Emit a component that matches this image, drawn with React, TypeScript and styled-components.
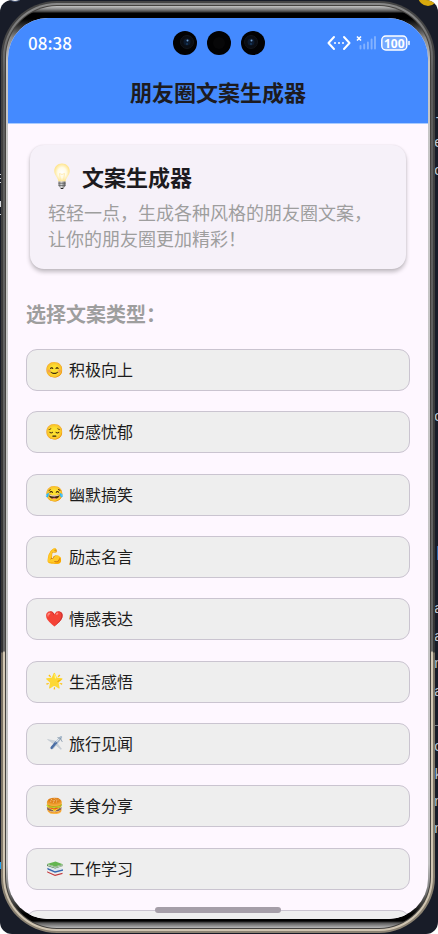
import React from "react";
import styled, { createGlobalStyle } from "styled-components";

const GlobalStyle = createGlobalStyle`
  *, *::before, *::after { box-sizing: border-box; }
  body {
    margin: 0;
    background: #ffffff;
    font-family: "Noto Sans CJK SC", "Noto Sans", sans-serif;
  }
  h1, h2, p, ul { margin: 0; padding: 0; }
`;

const Desktop = styled.div`
  position: relative;
  display: grid;
  grid-template-columns: minmax(0, 1fr);
  height: 100vh;
  padding: 1px 3px 1px 1px;
  overflow: hidden;
  border-radius: 12px;
  background: #181c28;
`;

const CodeEdge = styled.div<{ $side: "left" | "right" }>`
  position: absolute;
  top: 0;
  ${({ $side }) => ($side === "left" ? "left: 0;" : "right: 0;")}
  width: 4px;
  height: 100%;
  overflow: hidden;
`;

const Letter = styled.span<{ $top: number }>`
  position: absolute;
  top: ${({ $top }) => $top}px;
  left: 0;
  color: #c3c8d2;
  font-family: "Liberation Mono", monospace;
  font-size: 14px;
  line-height: 16px;
`;

const Mark = styled.i<{ $top: number; $height: number; $color: string }>`
  position: absolute;
  left: 0;
  top: ${({ $top }) => $top}px;
  width: 1px;
  height: ${({ $height }) => $height}px;
  background: ${({ $color }) => $color};
`;

const YellowDot = styled.i`
  position: absolute;
  top: -14px;
  right: 0;
  width: 20px;
  height: 20px;
  border-radius: 50%;
  background: #d8a90c;
`;

const MoonDot = styled.i`
  position: absolute;
  top: -16px;
  left: 6px;
  width: 18px;
  height: 18px;
  border: 1px solid #3b4a6b;
  border-radius: 50%;
  background: #f4f4f4;
`;

const Phone = styled.div`
  position: relative;
  display: grid;
  min-height: 0;
  padding: 2px;
  border-radius: 56px;
  background: linear-gradient(#454545 0, #343434 69.8%, #766e60 70%, #8b8272 100%);
`;

const Band = styled.div`
  display: grid;
  min-height: 0;
  padding: 2px;
  border-radius: 54px;
  background: linear-gradient(#8a8a8a 0, #5c5c5c 8%, #636363 69.8%, #d3c8b5 70%, #cfc4b1 100%);
`;

const Groove = styled.div`
  display: grid;
  min-height: 0;
  padding: 1px;
  border-radius: 52px;
  background: #44423f;
`;

const Lip = styled.div`
  display: grid;
  min-height: 0;
  padding: 12px 2px 9px;
  border-radius: 51px;
  background: linear-gradient(
    #c4c4c4 0,
    #8c8c8c 3px,
    #3c3c3c 6px,
    #000000 7px,
    #000000 13px,
    #8a8a8a 32px,
    #c6c6c6 56px,
    #c2c2c2 calc(100% - 64px),
    #777777 calc(100% - 36px),
    #000000 calc(100% - 14px),
    #000000 calc(100% - 7px),
    #5c5c5c calc(100% - 5px),
    #b8b8b8 100%
  );
`;

const Screen = styled.main`
  position: relative;
  display: flex;
  flex-direction: column;
  min-height: 0;
  overflow: hidden;
  border-radius: 40px;
  background: #fef7ff;
`;

const Header = styled.header`
  flex: none;
  border-bottom: 1px solid #a9cbff;
  background: #448aff;
`;

const StatusBar = styled.div`
  display: grid;
  grid-template-columns: 1fr auto 1fr;
  align-items: center;
  height: 50px;
  padding: 0 18px 0 20px;
  color: #ffffff;
`;

const Clock = styled.time`
  font-size: 17px;
  line-height: 24px;
  font-weight: 500;
`;

const Cameras = styled.div`
  display: flex;
  gap: 10px;
`;

const StatusIcons = styled.div`
  display: flex;
  justify-content: flex-end;
  align-items: center;
  gap: 5px;
`;

const AppTitle = styled.h1`
  padding: 7px 0 16px;
  color: #1d1b20;
  font-size: 22px;
  line-height: 32px;
  font-weight: 700;
  text-align: center;
`;

const Content = styled.div`
  flex: 1;
  min-height: 0;
  overflow: hidden;
  padding: 21px 18px 0;
`;

const Card = styled.section`
  margin: 0 4px;
  padding: 15px 18px 18px;
  border-radius: 14px;
  background: #f6f1f9;
  box-shadow: 0 3px 4px rgba(0, 0, 0, 0.24), 0 0 2px rgba(0, 0, 0, 0.1);
`;

const CardTitle = styled.h2`
  display: flex;
  align-items: center;
  gap: 6px;
  color: #1d1b20;
  font-size: 22px;
  line-height: 32px;
  font-weight: 700;
`;

const CardText = styled.p`
  margin-top: 7px;
  color: #9e9e9e;
  font-size: 18px;
  line-height: 26px;
`;

const SectionTitle = styled.h2`
  margin: 30px 0 20px;
  color: #9e9e9e;
  font-size: 20px;
  line-height: 30px;
  font-weight: 700;
`;

const TypeList = styled.ul`
  display: grid;
  grid-auto-rows: 42px;
  align-content: space-between;
  min-height: 603px;
  list-style: none;
`;

const TypeButton = styled.button`
  display: flex;
  align-items: center;
  gap: 5px;
  width: 100%;
  height: 100%;
  padding: 0 18px 2px;
  border: 1px solid #cac4d0;
  border-radius: 11px;
  background: #eeeeee;
  color: #1c1c1c;
  font-family: inherit;
  font-size: 16px;
  line-height: 24px;
  text-align: left;
  cursor: pointer;
`;

const Emoji = styled.span`
  display: flex;
  flex: none;
  justify-content: center;
  width: 19px;
  padding-top: 1px;
  font-family: "Noto Color Emoji", sans-serif;
  font-size: 15px;
`;

const HomeIndicator = styled.div`
  position: absolute;
  bottom: 6px;
  left: 50%;
  width: 30%;
  height: 6px;
  border-radius: 3px;
  background: #a59ea8;
  transform: translateX(-50%);
`;

const Camera = ({ lens, shift = 0 }: { lens: boolean; shift?: number }) => (
  <svg width="24" height="24" viewBox="0 0 24 24" aria-hidden="true">
    <circle cx="12" cy="12" r="12" fill="#020203" />
    {lens ? (
      <g transform={`translate(${shift} 0)`}>
        <circle cx="12" cy="11" r="6.5" fill="#0a0d13" stroke="#12161c" />
        <circle cx="12" cy="11" r="3.5" fill="#0c1a2e" />
        <circle cx="12.5" cy="9.5" r="1" fill="#6f9fd0" />
        <circle cx="12" cy="13" r="0.8" fill="#24507f" />
      </g>
    ) : (
      <circle cx="12" cy="12" r="6" fill="#070708" />
    )}
  </svg>
);

const Bulb = () => (
  <svg width="28" height="28" viewBox="0 0 28 28" aria-hidden="true">
    <defs>
      <radialGradient id="bulbGlow" cx="0.5" cy="0.5" r="0.55">
        <stop offset="0" stopColor="#ffffff" />
        <stop offset="0.5" stopColor="#fffbe6" />
        <stop offset="1" stopColor="#ffe07a" />
      </radialGradient>
      <linearGradient id="bulbBase" x1="0" x2="1" y1="0" y2="0">
        <stop offset="0" stopColor="#6c6c6c" />
        <stop offset="0.4" stopColor="#d6d6d6" />
        <stop offset="1" stopColor="#555555" />
      </linearGradient>
    </defs>
    <path d="M14 1.500c-4.500 0-7.700 3.300-7.700 7.600 0 4.100 3.300 6 4.200 10.400h7c.9-4.400 4.200-6.300 4.200-10.400 0-4.300-3.200-7.600-7.700-7.600z" fill="url(#bulbGlow)" />
    <path d="M12.500 18.500l-1-7 2.500 1 2.500-1-1 7" fill="none" stroke="#ffe9a6" strokeWidth="0.800" />
    <path d="M10.500 19.500h7v4.200l-1.800 2.300h-3.400l-1.800-2.300z" fill="url(#bulbBase)" />
    <path d="M10.500 21.300h7M10.700 23.500h6.600" stroke="#5f5f5f" strokeWidth="0.700" />
    <path d="M12.300 26h3.400l-.7 1h-2z" fill="#222222" />
  </svg>
);

const Plane = () => (
  <svg width="18" height="18" viewBox="0 0 18 18" aria-hidden="true">
    <path d="M1.500 5.500l8 1.500 1.500 2.500-3 .5zM8 9.500l3-.5 4.500 6-.6.4z" fill="#cbd3da" stroke="#b4bec7" strokeWidth="0.400" />
    <path d="M15.800 2.300c.7.600.3 1.800-.5 2.700L7.800 14.300c-1 1.100-2 1.400-2.600.9-.6-.5-.4-1.500.4-2.600l7.300-9c.9-1 2.200-1.900 2.900-1.300z" fill="#a9bacb" />
    <path d="M10 8.500l-4.400 5.300" stroke="#4a6ea5" strokeWidth="2.400" strokeLinecap="round" />
    <path d="M13.500 4.300L9.800 8.500" stroke="#e2e9ef" strokeWidth="1" />
    <path d="M11.500 3.500l3 1 1.800 3.400" fill="none" stroke="#71869e" strokeWidth="0.700" />
  </svg>
);

const Books = () => (
  <svg width="18" height="18" viewBox="0 0 18 18" aria-hidden="true">
    <path d="M1 12.300l8 3.500 7.500-2v1.300L9 17 1.300 13.600z" fill="#c4393c" />
    <path d="M1 11.800l7-1.300 8.300 2L9 14.600z" fill="#e6e7ea" />
    <path d="M1.300 8.800l7.700 3.400 8-2v1.600l-8 2-7.500-3.400z" fill="#3568b0" />
    <path d="M2 8.500l6.500-1.200L17 9.500 9 11.800z" fill="#dce6ef" />
    <path d="M1 5.200l8.200 2.600 7.600-2.200v1.500L9.200 9.400 1.200 7z" fill="#43793d" />
    <path d="M2 6.200l7.200 2.300 7.400-2" fill="none" stroke="#eef3eb" strokeWidth="0.800" />
    <path d="M1 5l8.500-2.400 7.300 2.700-7.600 2.300z" fill="#65b551" />
  </svg>
);

const types: [React.ReactNode, string][] = [
  ["😊", "积极向上"],
  ["😔", "伤感忧郁"],
  ["😂", "幽默搞笑"],
  ["💪", "励志名言"],
  ["❤️", "情感表达"],
  ["🌟", "生活感悟"],
  [<Plane />, "旅行见闻"],
  ["🍔", "美食分享"],
  [<Books />, "工作学习"],
];

const rightEdge: [number, string][] = [
  [110, "-"], [135, "e"], [163, "o"], [409, "o"], [545, "|"], [601, "a"],
  [629, "a"], [656, "n"], [684, "a"], [712, "_"], [739, "o"], [767, "k"],
  [794, "n"], [821, "n"],
];

const leftEdge: [number, number, string][] = [
  [174, 1, "#d5d8de"], [178, 1, "#d5d8de"], [182, 1, "#d5d8de"],
  [201, 6, "#d5d8de"], [214, 1, "#d5d8de"], [862, 7, "#1fa2f0"],
];

export default function App() {
  return (
    <>
      <GlobalStyle />
      <Desktop>
        <MoonDot />
        <CodeEdge $side="right" aria-hidden="true">
          {rightEdge.map(([top, letter]) => (
            <Letter key={top} $top={top}>{letter}</Letter>
          ))}
        </CodeEdge>
        <YellowDot />
        <CodeEdge $side="left" aria-hidden="true">
          {leftEdge.map(([top, height, color]) => (
            <Mark key={top} $top={top} $height={height} $color={color} />
          ))}
        </CodeEdge>
        <Phone>
          <Band>
            <Groove>
              <Lip>
                <Screen>
                  <Header>
                    <StatusBar>
                      <Clock>08:38</Clock>
                      <Cameras>
                        <Camera lens shift={2} />
                        <Camera lens={false} />
                        <Camera lens shift={-2} />
                      </Cameras>
                      <StatusIcons>
                        <svg width="24" height="16" viewBox="0 0 24 16" fill="none" stroke="#fff" strokeWidth="2" strokeLinecap="round" strokeLinejoin="round" aria-label="网络">
                          <path d="M7 2 1.500 8 7 14M17 2l5.500 6L17 14" />
                          <path d="M8 8h.01M12 8h.01M16 8h.01" />
                        </svg>
                        <svg width="20" height="16" viewBox="0 0 20 16" aria-label="无信号">
                          <path d="M1 1.500l4 4M5 1.500l-4 4" stroke="#fff" strokeWidth="1.600" />
                          <path d="M4.500 13.500v-2.500M8.200 13.500v-4M11.900 13.500V7.500M15.600 13.500V4.500M19 13.500V2" stroke="#82b1ff" strokeWidth="1.900" strokeLinecap="round" />
                        </svg>
                        <svg width="29" height="16" viewBox="0 0 29 16" aria-label="电量 100">
                          <rect x="0.800" y="1" width="25" height="14" rx="4" fill="#75a9ff" stroke="#fff" strokeWidth="1.400" />
                          <path d="M28 6.500v3" stroke="#fff" strokeWidth="1.500" strokeLinecap="round" />
                          <text x="13.300" y="12.500" fill="#fff" fontSize="12" fontWeight="700" textAnchor="middle" fontFamily="Noto Sans, sans-serif">100</text>
                        </svg>
                      </StatusIcons>
                    </StatusBar>
                    <AppTitle>朋友圈文案生成器</AppTitle>
                  </Header>
                  <Content>
                    <Card>
                      <CardTitle>
                        <Bulb />
                        文案生成器
                      </CardTitle>
                      <CardText>轻轻一点，生成各种风格的朋友圈文案，让你的朋友圈更加精彩！</CardText>
                    </Card>
                    <SectionTitle>选择文案类型：</SectionTitle>
                    <TypeList>
                      {types.map(([emoji, label]) => (
                        <li key={label}>
                          <TypeButton type="button">
                            <Emoji aria-hidden="true">{emoji}</Emoji>
                            {label}
                          </TypeButton>
                        </li>
                      ))}
                      <li>
                        <TypeButton type="button" aria-label="更多" />
                      </li>
                    </TypeList>
                  </Content>
                  <HomeIndicator />
                </Screen>
              </Lip>
            </Groove>
          </Band>
        </Phone>
      </Desktop>
    </>
  );
}
